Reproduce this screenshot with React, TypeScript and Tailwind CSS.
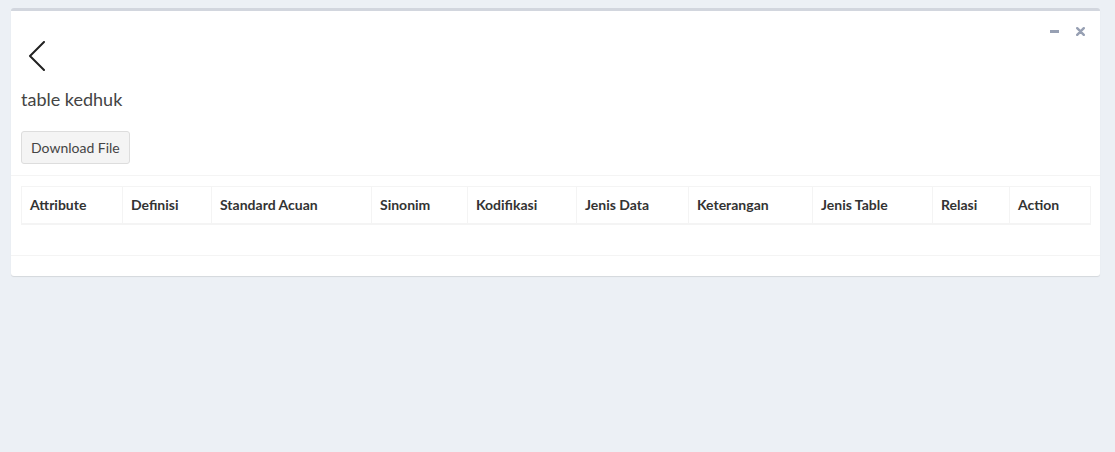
const columns = [
  { label: "Attribute", width: "w-[101px]" },
  { label: "Definisi", width: "w-[89px]" },
  { label: "Standard Acuan", width: "w-[160px]" },
  { label: "Sinonim", width: "w-[96px]" },
  { label: "Kodifikasi", width: "w-[109px]" },
  { label: "Jenis Data", width: "w-[112px]" },
  { label: "Keterangan", width: "w-[124px]" },
  { label: "Jenis Table", width: "w-[120px]" },
  { label: "Relasi", width: "w-[77px]" },
  { label: "Action", width: "w-[81px]" },
];

function BackArrow() {
  return (
    <svg width="18" height="30" viewBox="0 0 18 30" fill="none" className="ml-[7px] block">
      <path d="M16 1 L2 15 L16 29" stroke="#222" strokeWidth="2" strokeLinecap="round" strokeLinejoin="round" />
    </svg>
  );
}

export default function App() {
  return (
    <div className="min-h-[452px] bg-[#ecf0f5] pt-[8px] pl-[11px] pr-[15px] font-['Lato',sans-serif] text-[14px] text-[#333]">
      <div className="relative rounded-[3px] border-t-[3px] border-[#d2d6de] bg-white shadow-[0_1px_1px_rgba(0,0,0,0.1)]">
        {/* box tools */}
        <div className="absolute right-[15px] top-[16px] flex items-center gap-[17px]">
          <span className="block h-[3px] w-[9px] bg-[#97a0b3]" />
          <svg width="9" height="9" viewBox="0 0 9 9">
            <path d="M1.2 1.2 L7.8 7.8 M7.8 1.2 L1.2 7.8" stroke="#97a0b3" strokeWidth="2.4" strokeLinecap="round" />
          </svg>
        </div>

        <div className="border-b border-[#f4f4f4] px-[10px] pt-[10px] pb-[11px]">
          <div className="pt-[20px]">
            <BackArrow />
          </div>
          <h3 className="mt-[17px] text-[18px] leading-[22px] text-[#444]">table kedhuk</h3>
          <button className="mt-[21px] block h-[33px] rounded-[3px] border border-[#ddd] bg-[#f4f4f4] px-[9px] text-[14px] text-[#444]">
            Download File
          </button>
        </div>

        <div className="p-[10px] pb-[30px]">
          <table className="w-full table-fixed border-collapse border border-[#f4f4f4]">
            <thead>
              <tr>
                {columns.map((c) => (
                  <th
                    key={c.label}
                    className={`${c.width} border border-b-2 border-[#f4f4f4] p-[8px] text-left text-[14px] font-bold leading-[20px] text-[#333]`}
                  >
                    {c.label}
                  </th>
                ))}
              </tr>
            </thead>
            <tbody />
          </table>
        </div>

        <div className="h-[21px] border-t border-[#f4f4f4]" />
      </div>
    </div>
  );
}
